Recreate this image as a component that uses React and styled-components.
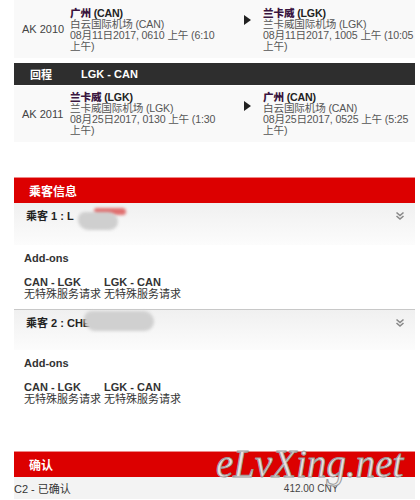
import React from 'react';
import styled, { createGlobalStyle } from 'styled-components';

const Global = createGlobalStyle`
  body {
    margin: 0;
    background: #fff;
    font-family: "Liberation Sans", Arial, "Noto Sans CJK SC", sans-serif;
    color: #333;
  }
`;

const Page = styled.div`
  position: relative;
  width: 420px;
  height: 500px;
  overflow: hidden;
  padding: 0 5px 0 14px;
  box-sizing: border-box;
`;

const FlightRow = styled.div`
  display: grid;
  grid-template-columns: 56px 160px 33px 1fr;
  align-items: center;
  height: ${(p) => p.h}px;
  background: #f9f9f9;
  font-size: 11px;
  line-height: 11px;
`;

const FlightNo = styled.div`
  padding-left: 8px;
  color: #444;
  white-space: nowrap;
`;

const Stop = styled.div`
  color: #555;
  align-self: start;
  padding-top: ${(p) => p.top}px;
  white-space: nowrap;
  font-size: 10.6px;
  letter-spacing: -0.15px;
`;

const City = styled.div`
  font-weight: bold;
  color: #222;
  b {
    color: #3a1540;
  }
`;

const Arrow = styled.div`
  width: 0;
  height: 0;
  border-top: 5px solid transparent;
  border-bottom: 5px solid transparent;
  border-left: 7px solid #222;
  align-self: start;
  margin-top: 15px;
  margin-left: 14px;
`;

const DarkBar = styled.div`
  display: flex;
  align-items: center;
  gap: 29px;
  height: 22px;
  margin-top: 5px;
  margin-bottom: 1px;
  background: #2e2e2e;
  color: #fff;
  font-size: 11px;
  font-weight: bold;
  padding-left: 16px;
`;

const RedBar = styled.div`
  display: flex;
  align-items: center;
  height: 26px;
  margin-top: ${(p) => p.mt}px;
  background: #dc0000;
  border-top: 1px solid #e88;
  color: #fff;
  font-size: 12px;
  font-weight: bold;
  padding-left: 15px;
  box-sizing: border-box;
`;

const PaxHead = styled.div`
  position: relative;
  display: flex;
  justify-content: space-between;
  align-items: flex-start;
  height: ${(p) => p.h}px;
  padding: 7px 10px 0 12px;
  box-sizing: border-box;
  background: linear-gradient(#f0f0f0, #fcfcfc);
  border-top: ${(p) => (p.line ? '1px solid #c8c8c8' : 'none')};
  font-size: 11px;
  line-height: 12px;
  font-weight: bold;
  color: #222;
`;

const Chevron = styled.svg`
  width: 10px;
  height: 10px;
  margin-top: 1px;
`;

const Blob = styled.span`
  position: absolute;
  left: ${(p) => p.x}px;
  top: ${(p) => p.y}px;
  width: ${(p) => p.w}px;
  height: ${(p) => p.hh}px;
  border-radius: 10px 14px 12px 16px;
  background: ${(p) => p.bg};
  filter: blur(1.5px);
`;

const AddOns = styled.div`
  padding: 7px 0 ${(p) => p.pb}px 10px;
  font-size: 11px;
  line-height: 12px;
  color: #333;
`;

const AddTitle = styled.div`
  font-weight: bold;
  margin-bottom: 12px;
`;

const Legs = styled.div`
  display: grid;
  grid-template-columns: 80px 80px;
  line-height: 12px;
`;

const LegName = styled.div`
  font-weight: bold;
  color: #333;
`;

const Confirm = styled.div`
  display: flex;
  align-items: center;
  height: 22px;
  background: #f3f3f3;
  font-size: 11px;
  color: #333;
  span:last-child {
    margin-left: 213px;
    color: #444;
    font-size: 10px;
  }
`;

const Watermark = styled.div`
  position: absolute;
  left: 216px;
  top: 440px;
  font-family: "Liberation Serif", serif;
  font-style: italic;
  font-size: 39px;
  line-height: 48px;
  color: rgba(238, 238, 238, 0.95);
  -webkit-text-stroke: 1px #9a9a9a;
`;

const chevron = (
  <Chevron viewBox="0 0 10 10">
    <path d="M1.5 1.5 L5 4.5 L8.5 1.5 M1.5 5 L5 8 L8.5 5" fill="none" stroke="#888" strokeWidth="1.6" />
  </Chevron>
);

const Leg = ({ city, rest, stop, date, top }) => (
  <Stop top={top}>
    <City><b>{city}</b> {rest}</City>
    <div>{stop}</div>
    <div>{date}</div>
    <div>上午)</div>
  </Stop>
);

const Pax = ({ label, h, line, pb }) => (
  <>
    <PaxHead h={h} line={line}>
      <span>{label}</span>
      {chevron}
    </PaxHead>
    <AddOns pb={pb}>
      <AddTitle>Add-ons</AddTitle>
      <Legs>
        <LegName>CAN - LGK</LegName>
        <LegName>LGK - CAN</LegName>
        <div>无特殊服务请求</div>
        <div>无特殊服务请求</div>
      </Legs>
    </AddOns>
  </>
);

export default function App() {
  return (
    <Page>
      <Global />
      <FlightRow h={58}>
        <FlightNo>AK 2010</FlightNo>
        <Leg top={8} city="广州" rest="(CAN)" stop="白云国际机场 (CAN)" date="08月11日2017, 0610 上午 (6:10" />
        <Arrow />
        <Leg top={8} city="兰卡威" rest="(LGK)" stop="兰卡威国际机场 (LGK)" date="08月11日2017, 1005 上午 (10:05" />
      </FlightRow>
      <DarkBar>
        <span>回程</span>
        <span>LGK - CAN</span>
      </DarkBar>
      <FlightRow h={56}>
        <FlightNo>AK 2011</FlightNo>
        <Leg top={6} city="兰卡威" rest="(LGK)" stop="兰卡威国际机场 (LGK)" date="08月25日2017, 0130 上午 (1:30" />
        <Arrow />
        <Leg top={6} city="广州" rest="(CAN)" stop="白云国际机场 (CAN)" date="08月25日2017, 0525 上午 (5:25" />
      </FlightRow>
      <RedBar mt={35}>乘客信息</RedBar>
      <Pax label="乘客 1 : L" h={42} pb={9} />
      <Pax label="乘客 2 : CHE" h={41} line pb={0} />
      <RedBar mt={46}>确认</RedBar>
      <Confirm>
        <span>C2 - 已确认</span>
        <span>412.00 CNY</span>
      </Confirm>
      <Blob x={94} y={208} w={32} hh={7} bg="#e07070" />
      <Blob x={78} y={212} w={40} hh={18} bg="#cfcfcf" />
      <Blob x={84} y={311} w={70} hh={20} bg="#d0d0d0" />
      <Watermark>eLvXing.net</Watermark>
    </Page>
  );
}
